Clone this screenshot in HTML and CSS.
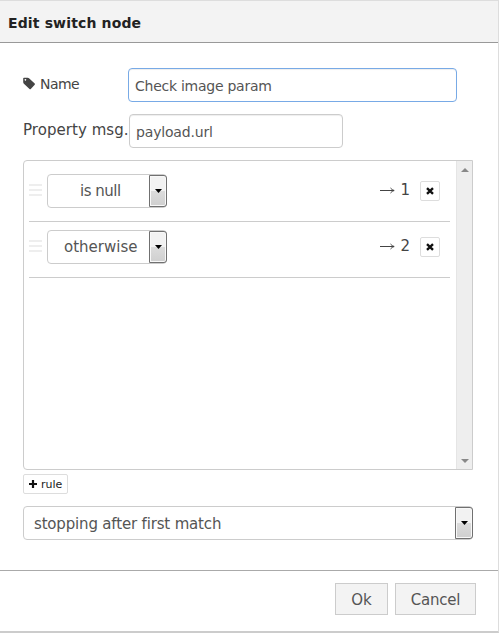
FILE: index.html
```html
<!DOCTYPE html>
<html lang="en">
<head>
<meta charset="utf-8">
<title>Edit switch node</title>
<link rel="stylesheet" href="styles.css">
</head>
<body>
<main class="dialog">
  <header class="titlebar"><span class="title">Edit switch node</span></header>
  <section class="content">
    <div class="row name-row">
      <svg class="tag" width="13" height="13" viewBox="0 0 13 13"><path fill="#444" fill-rule="evenodd" d="M0.2 1.6Q.2.8 1 .8H4.6Q5.6 .8 6.3 1.5L11.7 6.5Q12.3 7.1 11.7 7.7L7.8 11.9Q7.2 12.4 6.5 11.9L.9 6.7Q.2 6 .2 5ZM2.4 2a.8 .8 0 1 0 .01 0Z"/></svg>
      <span class="label name-label">Name</span>
      <div class="field name-field"><span class="name-text">Check image param</span></div>
    </div>
    <div class="row prop-row">
      <span class="label prop-label">Property msg.</span>
      <div class="field prop-field"><span class="prop-text">payload.url</span></div>
    </div>
    <div class="rules">
      <div class="rule-list">
        <div class="rule">
          <span class="handle"><i></i><i></i><i></i></span>
          <div class="select small"><span class="value isnull">is null</span><span class="drop"><svg width="7" height="4"><path d="M0 0H7L3.5 4Z"/></svg></span></div>
          <span class="target"><svg width="15" height="9" viewBox="0 0 15 9"><path d="M0 4.5H14M10.5 2Q12 4 14.2 4.5Q12 5 10.5 7" fill="none" stroke="#444"/></svg><span>1</span></span>
          <span class="remove"><svg width="8" height="8" viewBox="0 0 8 8"><path d="M1 1.2L7 6.8M7 1.2L1 6.8" stroke="#111" stroke-width="2.4"/></svg></span>
        </div>
        <div class="rule">
          <span class="handle"><i></i><i></i><i></i></span>
          <div class="select small"><span class="value otherwise">otherwise</span><span class="drop"><svg width="7" height="4"><path d="M0 0H7L3.5 4Z"/></svg></span></div>
          <span class="target"><svg width="15" height="9" viewBox="0 0 15 9"><path d="M0 4.5H14M10.5 2Q12 4 14.2 4.5Q12 5 10.5 7" fill="none" stroke="#444"/></svg><span>2</span></span>
          <span class="remove"><svg width="8" height="8" viewBox="0 0 8 8"><path d="M1 1.2L7 6.8M7 1.2L1 6.8" stroke="#111" stroke-width="2.4"/></svg></span>
        </div>
      </div>
      <div class="scrollbar"><svg width="8" height="4"><path fill="#888" d="M0 4L4 0L8 4Z"/></svg><svg width="8" height="4"><path fill="#888" d="M0 0H8L4 4Z"/></svg></div>
    </div>
    <div class="add"><svg width="8" height="8"><path d="M4 0V8M0 4H8" stroke="#111" stroke-width="2.2"/></svg><span>rule</span></div>
    <div class="select full"><span class="value">stopping after first match</span><span class="drop"><svg width="7" height="4"><path d="M0 0H7L3.5 4Z"/></svg></span></div>
  </section>
  <footer class="actions"><div class="button ok">Ok</div><div class="button cancel">Cancel</div></footer>
</main>
</body>
</html>
```
FILE: styles.css
```css
* { box-sizing: border-box; }
body { margin: 0; background: #fff; font-family: "DejaVu Sans", Verdana, sans-serif; color: #444; }
svg { display: block; flex: none; }
.dialog { width: 499px; height: 633px; border: solid #ddd; border-width: 1px 1px 2px 0; border-bottom-color: #ccc; display: flex; flex-direction: column; white-space: nowrap; overflow: hidden; }
.titlebar { height: 42px; background: #f3f3f3; border-bottom: 1px solid #999; padding: 12px 8px; line-height: 20px; font-size: 14px; font-weight: bold; color: #222; }
.title { letter-spacing: .14px; }
.content { height: 527px; padding: 25px 25px 0 23px; }
.row { display: flex; }
.name-row { height: 34px; margin-bottom: 12px; }
.tag { margin-top: 9px; }
.name-label { width: 92px; margin-left: 4px; flex: none; font-size: 14px; letter-spacing: -.55px; line-height: 32px; }
.field { height: 34px; border: 1px solid #ccc; border-radius: 4px; padding: 2px 6px 0 7px; line-height: 31px; font-size: 14px; color: #555; box-shadow: inset 0 1px 1px rgba(0,0,0,.07); }
.name-field { width: 329px; margin-left: -4px; border-color: #78aae6; padding-left: 6px; }
.name-text { letter-spacing: -.26px; }
.prop-row { height: 34px; margin-bottom: 12px; }
.prop-label { width: 106px; flex: none; font-size: 15px; line-height: 33px; letter-spacing: .05px; }
.prop-field { width: 214px; padding-left: 6px; }
.prop-text { letter-spacing: -.17px; }
.rules { height: 310px; width: 450px; border: 1px solid #ccc; border-radius: 4px 0 0 4px; display: flex; }
.rule-list { flex: 1; padding: 5px 6px 0 5px; }
.rule { height: 56px; border-bottom: 1px solid #ccc; display: flex; padding-top: 8px; }
.handle { width: 13px; margin: 10px 5px 0 0; display: flex; flex-direction: column; gap: 3px; }
.handle i { height: 2px; background: #eee; }
.select { height: 34px; border: 1px solid #ccc; border-radius: 4px; display: flex; background: #fff; color: #555; font-size: 15px; line-height: 33px; }
.small { width: 120px; }
.value { flex: 1; }
.isnull { padding-left: 32px; letter-spacing: -.5px; }
.otherwise { padding-left: 16px; }
.drop { width: 18px; height: 32px; margin-right: -1px; flex: none; border: 1px solid #707070; border-radius: 0 3px 3px 0; background: linear-gradient(#f2f2f2 50%, #dcdcdc 50%, #cfcfcf); box-shadow: inset 0 0 0 1px #f8f8f8; display: flex; align-items: center; justify-content: center; }
.target { margin-left: auto; display: flex; align-items: center; height: 32px; gap: 5px; font-size: 15px; }
.remove { width: 20px; height: 20px; margin: 7px 10px 0 10px; border: 1px solid #ddd; border-radius: 2px; display: flex; align-items: center; justify-content: center; }
.scrollbar { width: 16px; background: #eee; border-left: 1px solid #e5e5e5; display: flex; flex-direction: column; align-items: center; justify-content: space-between; padding: 7px 0 6px; }
.add { width: 45px; height: 20px; margin-top: 4px; border: 1px solid #ddd; border-radius: 2px; display: flex; align-items: center; padding-left: 5px; gap: 4px; font-size: 11px; color: #222; }
.full { width: 450px; margin-top: 12px; }
.full .value { padding-left: 10px; letter-spacing: -.17px; line-height: 34px; }
.actions { flex: 1; border-top: 1px solid #aaa; display: flex; justify-content: flex-end; gap: 7px; padding: 12px 22px 0 0; }
.button { height: 32px; border: 1px solid #ccc; background: #f3f3f3; color: #555; font-size: 15px; line-height: 32px; text-align: center; }
.ok { width: 53px; }
.cancel { width: 81px; letter-spacing: -.25px; }
```
